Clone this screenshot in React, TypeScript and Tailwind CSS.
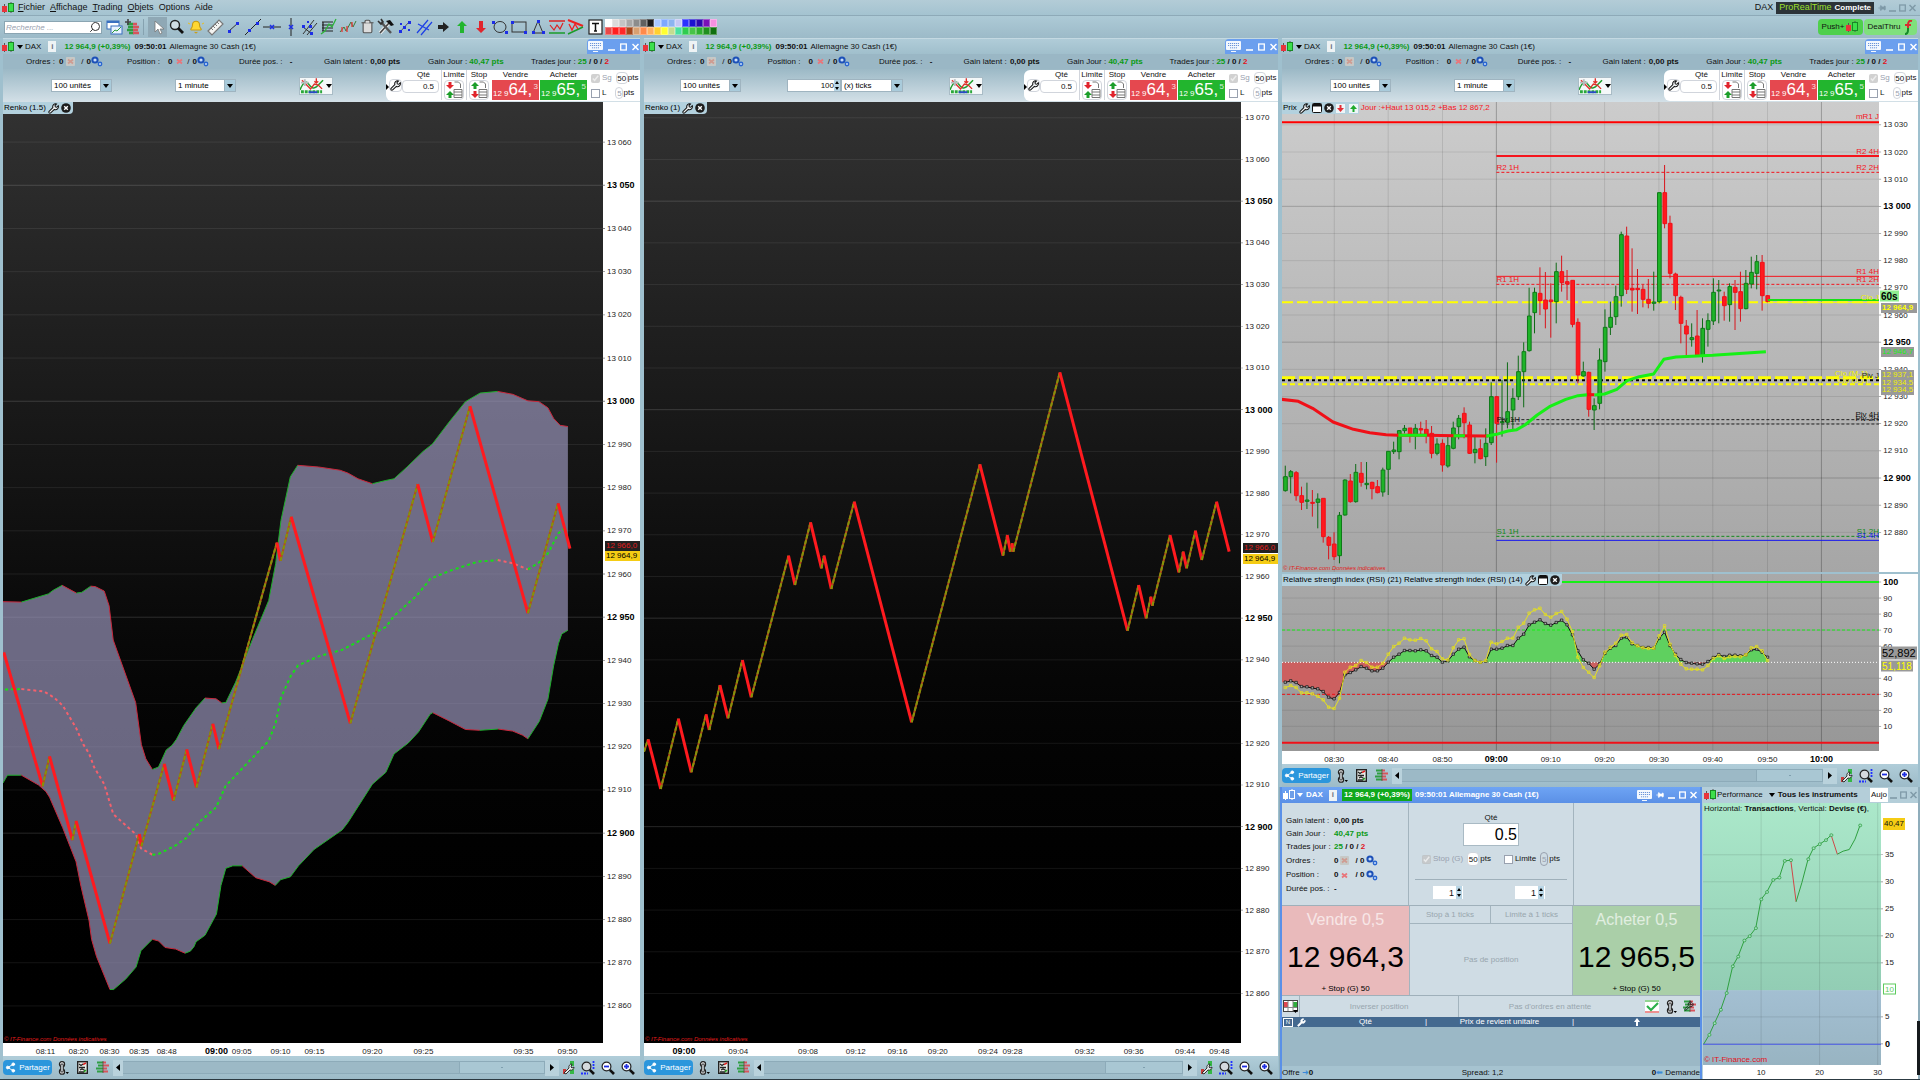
import { type ReactNode } from 'react'
import { Share2, Wrench, Trash2, Bell, Search, Pin } from 'lucide-react'

type Pt = [number, number]
type Box = { x: number; y: number; w: number; h: number }
type Label = { t: string; x: number; y: number; bold?: boolean; color?: string; anchor?: 'start' | 'middle' | 'end' }

const viewBox = (b: Box) => `${b.x} ${b.y} ${b.w} ${b.h}`
const points = (pts: Pt[]) => pts.map((p) => p.join(',')).join(' ')
const price = (n: number) => `${Math.floor(n / 1000)} ${String(n % 1000).padStart(3, '0')}`

/* ---------- chart data ---------- */

const RENKO1: Box = { x: 7, y: -681, w: 1470, h: 2305 }
const RENKO2: Box = { x: 10, y: -714, w: 1463, h: 2823 }
const PRICE: Box = { x: 5, y: 6, w: 1462, h: 1410 }
const RSI: Box = { x: 5, y: 42, w: 1462, h: 531 }
const PERF: Box = { x: 1040, y: 72, w: 432, h: 783 }

const zig1: Pt[] = [[9, 667], [104, 995], [121, 922], [177, 1127], [186, 1080], [269, 1380], [341, 1112], [346, 1142], [402, 940], [425, 1030], [457, 905], [481, 998], [521, 842], [536, 904], [678, 398], [687, 443], [713, 335], [858, 841], [1023, 255], [1060, 397], [1151, 64], [1293, 571], [1367, 302], [1396, 413]]

const upper: Pt[] = [[7, 543], [52, 544], [118, 524], [130, 515], [152, 503], [187, 522], [200, 520], [222, 505], [233, 506], [255, 517], [267, 553], [277, 637], [332, 790], [346, 893], [357, 928], [373, 954], [388, 948], [407, 906], [421, 895], [432, 880], [450, 846], [480, 803], [502, 779], [529, 781], [543, 791], [553, 790], [577, 740], [618, 636], [658, 540], [675, 450], [688, 344], [711, 237], [729, 209], [780, 213], [833, 221], [852, 228], [877, 242], [912, 254], [945, 246], [965, 242], [997, 213], [1036, 175], [1059, 157], [1100, 103], [1140, 53], [1176, 32], [1219, 28], [1256, 35], [1293, 51], [1320, 53], [1342, 68], [1356, 94], [1372, 111], [1391, 114]]

const lower: Pt[] = [[7, 987], [18, 968], [52, 968], [94, 992], [112, 1008], [121, 1022], [153, 1096], [186, 1180], [198, 1240], [218, 1325], [224, 1370], [236, 1412], [269, 1493], [278, 1493], [308, 1467], [333, 1438], [345, 1398], [373, 1370], [388, 1374], [404, 1390], [430, 1394], [453, 1404], [466, 1399], [475, 1388], [480, 1376], [502, 1360], [530, 1308], [541, 1238], [553, 1196], [570, 1190], [593, 1190], [626, 1219], [659, 1229], [674, 1238], [687, 1224], [711, 1217], [731, 1190], [769, 1150], [838, 1102], [852, 1084], [912, 990], [945, 961], [965, 916], [1000, 889], [1025, 862], [1054, 818], [1060, 815], [1100, 835], [1140, 856], [1175, 858], [1220, 855], [1256, 860], [1280, 870], [1293, 879], [1321, 836], [1342, 782], [1356, 700], [1368, 645], [1376, 622], [1391, 613]]

const middle: { color: string; pts: Pt[] }[] = [
  { color: '#16e016', pts: [[12, 758], [52, 757]] },
  { color: '#f4606c', pts: [[52, 757], [108, 763], [132, 778], [153, 797], [186, 852], [204, 893], [218, 915], [230, 948], [255, 990], [277, 1063], [333, 1113], [345, 1147], [373, 1163]] },
  { color: '#16e016', pts: [[373, 1163], [388, 1161], [430, 1140], [457, 1121], [490, 1081], [529, 1047], [552, 995], [603, 941], [658, 884], [675, 840], [688, 778], [712, 725], [730, 699], [780, 677], [838, 661], [878, 640], [945, 605], [965, 578], [1020, 529], [1054, 487], [1100, 468], [1170, 445], [1219, 441]] },
  { color: '#f4606c', pts: [[1219, 441], [1256, 449], [1293, 464]] },
  { color: '#16e016', pts: [[1293, 464], [1320, 447], [1342, 425], [1368, 375], [1385, 362]] },
]

const zig2: Pt[] = [[10, 1235], [20, 1198], [51, 1347], [94, 1136], [126, 1297], [162, 1123], [170, 1170], [196, 1035], [216, 1135], [251, 960], [273, 1072], [364, 647], [380, 735], [418, 547], [445, 685], [451, 647], [469, 747], [525, 485], [666, 1147], [833, 373], [890, 647], [900, 585], [908, 635], [912, 610], [915, 635], [1029, 97], [1195, 872], [1222, 735], [1241, 835], [1252, 770], [1256, 797], [1299, 585], [1321, 697], [1331, 635], [1340, 685], [1361, 572], [1377, 660], [1413, 485], [1444, 635]]

// high, body top, body bottom, low, 1 = up
const candles = [
  [1097, 1130, 1172, 1175, 1], [1110, 1115, 1130, 1180, 1], [1113, 1118, 1187, 1202, 0], [1160, 1187, 1207, 1230, 0], [1148, 1200, 1204, 1227, 1],
  [1170, 1207, 1210, 1250, 0], [1180, 1197, 1207, 1285, 1], [1195, 1195, 1310, 1328, 0], [1308, 1312, 1336, 1378, 0], [1297, 1332, 1370, 1380, 0],
  [1236, 1246, 1367, 1390, 1], [1138, 1140, 1245, 1247, 1], [1122, 1143, 1205, 1208, 0], [1092, 1117, 1205, 1208, 1], [1086, 1120, 1147, 1160, 0],
  [1086, 1150, 1154, 1168, 1], [1145, 1147, 1166, 1198, 0], [1140, 1160, 1178, 1180, 0], [1103, 1110, 1176, 1190, 1], [1054, 1054, 1108, 1185, 1],
  [1025, 1050, 1055, 1062, 1], [990, 992, 1055, 1078, 1], [975, 985, 992, 1000, 1], [984, 984, 1005, 1028, 0], [972, 985, 1005, 1048, 1],
  [965, 986, 990, 1005, 0], [960, 988, 1003, 1030, 0], [978, 1000, 1060, 1075, 0], [1015, 1032, 1060, 1066, 1], [1018, 1030, 1095, 1115, 0],
  [1010, 1037, 1098, 1103, 1], [965, 984, 1045, 1048, 1], [945, 955, 980, 1018, 1], [922, 940, 968, 1015, 0], [965, 975, 1060, 1062, 0],
  [1010, 1048, 1058, 1090, 1], [1018, 1046, 1076, 1078, 0], [985, 1030, 1070, 1098, 1], [847, 890, 1028, 1035, 1], [888, 890, 970, 1088, 0],
  [840, 965, 968, 1010, 1], [787, 935, 967, 985, 1], [865, 895, 930, 988, 1], [767, 815, 890, 900, 1], [727, 755, 815, 922, 1],
  [563, 648, 752, 755, 1], [563, 577, 638, 700, 1], [502, 580, 602, 645, 0], [516, 600, 627, 685, 0], [550, 600, 605, 713, 0],
  [488, 515, 605, 670, 1], [467, 515, 548, 575, 0], [510, 545, 552, 600, 0], [541, 541, 673, 682, 0], [655, 667, 825, 850, 0],
  [785, 815, 828, 830, 1], [815, 817, 928, 950, 0], [895, 917, 930, 990, 1], [745, 780, 910, 928, 1], [628, 682, 785, 815, 1],
  [605, 652, 682, 705, 1], [557, 590, 650, 675, 1], [395, 404, 587, 620, 1], [380, 408, 568, 582, 0], [445, 565, 570, 635, 0],
  [507, 565, 569, 642, 0], [555, 568, 598, 622, 0], [537, 598, 610, 625, 0], [515, 606, 610, 632, 1], [278, 278, 605, 610, 1],
  [195, 278, 371, 385, 0], [347, 370, 520, 535, 0], [518, 522, 587, 630, 0], [587, 592, 670, 730, 0], [660, 678, 702, 765, 0],
  [670, 713, 719, 740, 1], [630, 708, 765, 767, 0], [655, 685, 767, 788, 1], [640, 662, 688, 740, 1], [535, 577, 663, 675, 1],
  [540, 570, 573, 670, 1], [575, 590, 617, 662, 0], [550, 560, 614, 665, 1], [540, 562, 577, 690, 0], [515, 575, 626, 665, 0],
  [510, 550, 626, 628, 1], [470, 517, 552, 565, 1], [465, 485, 520, 568, 1], [465, 487, 587, 632, 0], [585, 587, 605, 607, 0],
]
const candleX = (i: number) => 13 + i * 13.27

const rsi21 = [367, 363, 368, 380, 381, 384, 387, 395, 412, 417, 398, 345, 338, 330, 320, 325, 333, 333, 325, 307, 292, 283, 272, 272, 273, 270, 273, 287, 292, 307, 303, 283, 268, 262, 291, 302, 307, 304, 268, 268, 265, 257, 257, 235, 223, 195, 187, 180, 191, 196, 188, 181, 195, 225, 273, 300, 310, 328, 312, 280, 265, 257, 235, 232, 252, 257, 263, 263, 265, 235, 217, 257, 283, 299, 308, 310, 312, 313, 305, 293, 284, 290, 286, 286, 288, 285, 270, 268, 277, 292]
const rsi14 = [383, 377, 383, 399, 399, 402, 409, 420, 442, 446, 415, 337, 322, 317, 302, 308, 322, 322, 310, 283, 260, 250, 235, 240, 241, 236, 243, 267, 275, 297, 300, 264, 240, 237, 284, 302, 307, 302, 247, 252, 245, 235, 235, 202, 190, 160, 150, 145, 164, 172, 161, 155, 178, 215, 292, 323, 337, 353, 318, 277, 262, 250, 226, 224, 248, 258, 264, 266, 265, 228, 198, 253, 287, 313, 327, 328, 328, 330, 317, 296, 288, 296, 291, 290, 291, 285, 264, 260, 273, 302]
const rsiPoints = (values: number[]): Pt[] => values.map((v, i) => [candleX(i), v])
const RSI_MID = 307

const perf: Pt[] = [[1042, 792], [1055, 765], [1068, 730], [1083, 690], [1097, 640], [1112, 560], [1125, 531], [1140, 483], [1153, 470], [1168, 446], [1181, 360], [1195, 338], [1210, 302], [1225, 295], [1238, 245], [1253, 243], [1266, 367], [1280, 310], [1295, 240], [1308, 207], [1323, 195], [1338, 183], [1351, 168], [1366, 225], [1380, 216], [1395, 211], [1409, 180], [1421, 139]]
const perfHidden = [0, 16, 17, 23, 24, 25, 26]

const times1: [string, number][] = [['08:11', 111], ['08:20', 192], ['08:30', 268], ['08:35', 341], ['08:48', 408], ['09:00', 530], ['09:05', 592], ['09:10', 687], ['09:15', 770], ['09:20', 912], ['09:25', 1037], ['09:35', 1282], ['09:50', 1390]]
const times2: [string, number][] = [['09:00', 108], ['09:04', 241], ['09:08', 412], ['09:12', 529], ['09:16', 631], ['09:20', 730], ['09:24', 853], ['09:28', 913], ['09:32', 1090], ['09:36', 1210], ['09:44', 1336], ['09:48', 1420]]
const times3: [string, number][] = [['08:30', 133], ['08:40', 265], ['08:50', 398], ['09:00', 530], ['09:10', 663], ['09:20', 795], ['09:30', 928], ['09:40', 1060], ['09:50', 1194], ['10:00', 1326]]

/* ---------- small icons ---------- */

function Candles({ white }: { white?: boolean }) {
  return (
    <svg width="14" height="12" viewBox="0 0 14 12" className="shrink-0">
      <path d="M3.5 2v9M10 0v11" stroke={white ? '#fff' : '#555'} />
      <rect x="1" y="4" width="5" height="6" fill={white ? '#fff' : '#e8343c'} />
      <rect x="7.5" y="1.5" width="5" height="8" fill={white ? '#6f9fe8' : '#3ce04c'} stroke={white ? '#fff' : '#188a24'} />
    </svg>
  )
}

function Caret({ className = 'text-black' }: { className?: string }) {
  return (
    <svg width="6" height="4" viewBox="0 0 6 4" className={`shrink-0 ${className}`}>
      <path d="M0 0h6L3 4z" fill="currentColor" />
    </svg>
  )
}

function Gears() {
  return (
    <svg width="12" height="11" viewBox="0 0 12 11" className="shrink-0">
      <circle cx="4" cy="4" r="2.6" fill="#c8dcf8" stroke="#1c50b8" strokeWidth="2" />
      <circle cx="9" cy="8" r="1.7" fill="#c8dcf8" stroke="#2a66d0" strokeWidth="1.4" />
    </svg>
  )
}

function CrossBox({ pink }: { pink?: boolean }) {
  return (
    <svg width="9" height="9" viewBox="0 0 9 9" className="shrink-0">
      {!pink && <rect width="9" height="9" rx="1" fill="#c6c8c6" />}
      <path d="M2 2.5l5 4M7 2.5l-5 4" stroke={pink ? '#e8767c' : '#cf9c92'} strokeWidth="1.8" />
    </svg>
  )
}

function Info() {
  return (
    <span className="flex h-[11px] w-2 items-center justify-center bg-[#eef3f5] text-[8px] font-bold leading-none text-gray-500">i</span>
  )
}

function CloseDot() {
  return (
    <svg width="10" height="10" viewBox="0 0 10 10">
      <circle cx="5" cy="5" r="4.8" fill="#1c1c1c" />
      <path d="M3.2 3.2l3.6 3.6M6.8 3.2L3.2 6.8" stroke="#fff" strokeWidth="1.4" />
    </svg>
  )
}

// Hollow spanner used on every chart header
function Spanner({ size = 11 }: { size?: number }) {
  return (
    <svg width={size} height={size} viewBox="0 0 12 12">
      <path d="M1.200 10.800a1.200 1.200 0 0 1 0-1.700L5.300 5a3.200 3.200 0 0 1 4-4L7.600 2.800l.4 1.500 1.500.4L11.200 3a3.200 3.200 0 0 1-4.200 4L2.900 10.800a1.200 1.200 0 0 1-1.700 0z" fill="#f2f5f6" stroke="#111" strokeWidth="1.100" />
    </svg>
  )
}

function MiniWindow() {
  return (
    <svg width="10" height="10" viewBox="0 0 10 10">
      <rect x=".5" y=".5" width="9" height="9" rx="1" fill="#fff" stroke="#111" />
      <path d="M1 1h8v2.5H1z" fill="#111" />
    </svg>
  )
}

function MiniArrow({ up }: { up?: boolean }) {
  return (
    <svg width="9" height="9" viewBox="0 0 9 9">
      <rect width="9" height="9" fill="#eef5f7" />
      <path d={up ? 'M4.5 1L8 5H5.5v3h-2V5H1z' : 'M4.5 8L8 4H5.5V1h-2v3H1z'} fill={up ? '#1faa2c' : '#e23038'} />
    </svg>
  )
}

function WindowKeys({ muted, pin, keyboard = true }: { muted?: boolean; pin?: boolean; keyboard?: boolean }) {
  const line = muted ? '#7f9aa8' : '#fff'
  return (
    <>
      {keyboard && (
        <button type="button" aria-label="Clavier">
          <svg width="15" height="11" viewBox="0 0 15 11">
            <rect width="15" height="9" rx="1" fill="#f3f8fe" />
            <path d="M2 2.5h11M2 4.5h11M4 6.8h7" stroke="#6a94d8" strokeDasharray="1.2 .8" />
            <path d="M5 10.5h5" stroke="#f3f8fe" />
          </svg>
        </button>
      )}
      {pin && <button type="button" aria-label="Épingler"><Pin size={8} className="rotate-90" color={line} fill={line} /></button>}
      <button type="button" aria-label="Réduire">
        <svg width="7" height="8" viewBox="0 0 7 8"><path d="M0 7h7" stroke={line} strokeWidth="1.6" /></svg>
      </button>
      <button type="button" aria-label="Agrandir">
        <svg width="7" height="8" viewBox="0 0 7 8"><rect x=".7" y="1" width="5.6" height="6" fill="none" stroke={line} strokeWidth="1.3" /></svg>
      </button>
      <button type="button" aria-label="Fermer">
        <svg width="7" height="8" viewBox="0 0 7 8"><path d="M.5 1l6 6M6.5 1l-6 6" stroke={line} strokeWidth="1.5" /></svg>
      </button>
    </>
  )
}

function LinkIcon() {
  return (
    <svg width="12" height="14" viewBox="0 0 12 14">
      <rect x="2.500" y=".7" width="5" height="5" rx="2.200" fill="#f4f6f7" stroke="#222" strokeWidth="1.300" />
      <rect x="2.500" y="8.200" width="5" height="5" rx="2.200" fill="#f4f6f7" stroke="#222" strokeWidth="1.300" />
      <rect x="3.700" y="3" width="2.600" height="8" rx="1" fill="#cfd6da" stroke="#222" />
      <path d="M8.5 11h3.5l-1.7 2z" fill="#000" />
    </svg>
  )
}

function NotesIcon() {
  return (
    <svg width="11" height="13" viewBox="0 0 11 13">
      <rect x=".7" y=".7" width="9.6" height="11.600" fill="#e9ece8" stroke="#222" strokeWidth="1.400" />
      <path d="M2 3l2 1.5L6 3M2 6.5h6M3 9l2-1 3 1.5M2 11h5" stroke="#222" fill="none" strokeWidth="1.300" />
      <path d="M6 3.500l3-1.500" stroke="#d22" strokeWidth="1.400" />
      <path d="M7 11l2-2" stroke="#2a2" strokeWidth="1.400" />
    </svg>
  )
}

function BookIcon() {
  return (
    <svg width="13" height="13" viewBox="0 0 13 13">
      <path d="M1 1.5h6M2 4.5h5M0 7.5h7M1 10.5h6" stroke="#2f9e43" strokeWidth="2.2" />
      <path d="M7 1.5h3M7 4.5h6M7 7.5h4M7 10.5h5" stroke="#d8545c" strokeWidth="2.2" />
      <path d="M7 0v12" stroke="#5a4a40" strokeWidth=".8" />
    </svg>
  )
}

function ZoomIcon({ sign }: { sign?: 'plus' | 'minus' }) {
  return (
    <svg width="14" height="14" viewBox="0 0 14 14">
      <circle cx="5.5" cy="5.5" r="4.4" fill={sign ? '#fff' : '#d4dade'} stroke="#222" strokeWidth="1.2" />
      <path d="M8.8 8.8L13 13" stroke="#111" strokeWidth="2.6" />
      {sign && <path d={sign === 'plus' ? 'M3 5.5h5M5.5 3v5' : 'M3 5.5h5'} stroke="#2030e0" strokeWidth="1.8" />}
      {!sign && <path d="M12.5 0v8M0 12.5h7" stroke="#2030ff" strokeWidth="1.8" strokeDasharray="2 1" />}
    </svg>
  )
}

function WrenchColor() {
  return (
    <svg width="13" height="14" viewBox="0 0 13 14">
      <path d="M8 0h4v5H8z" fill="#35b845" />
      <path d="M8 8h4v5H8z" fill="#35b845" />
      <path d="M1 8h3v5H1z" fill="#c83a3a" />
      <path d="M2 12l5-5a3 3 0 0 1 3-4l-1 3 1 1 2-1a3 3 0 0 1-4 3l-4 4z" fill="#e4e8e8" stroke="#222" strokeWidth=".9" />
    </svg>
  )
}

const toolIcons: { name: string; icon: ReactNode }[] = [
  { name: 'Curseur', icon: <path d="M6 3v11l3-3 2 5 2-1-2-4h4z" fill="#fff" stroke="#777" strokeWidth=".8" /> },
  { name: 'Loupe', icon: <><circle cx="7" cy="7" r="4.5" fill="#cfdde3" stroke="#222" strokeWidth="1.4" /><path d="M10 10l5 5" stroke="#111" strokeWidth="2.8" /></> },
  { name: 'Alerte', icon: <><Bell size={14} x={2} y={2} color="#c79a10" fill="#ffd733" strokeWidth={1.8} /><path d="M1 5l2 1M17 5l-2 1" stroke="#e8c020" /></> },
  { name: 'Règle', icon: <><path d="M2 13L13 2l4 4L6 17z" fill="#f4f4f2" stroke="#777" strokeWidth="1.200" /><path d="M5 10l2 2M7 8l2 2M9 6l2 2M11 4l2 2" stroke="#777" /></> },
  { name: 'Segment', icon: <><path d="M4 13l9-8" stroke="#333" /><path d="M3 12h3v3H3zM11 4h3v3h-3z" fill="#1d2ee6" /></> },
  { name: 'Droite', icon: <><path d="M1 17L17 1" stroke="#222" /><path d="M4 11h3v3H4zM12 4h3v3h-3z" fill="#1d2ee6" /></> },
  { name: 'Horizontale', icon: <><path d="M0 9h18" stroke="#222" /><path d="M7 7l4 4M11 7l-4 4" stroke="#1d2ee6" strokeWidth="1.5" /></> },
  { name: 'Verticale', icon: <><path d="M9 0v18" stroke="#222" /><path d="M7 7l4 4M11 7l-4 4" stroke="#1d2ee6" strokeWidth="1.5" /></> },
  { name: 'Fourche', icon: <><path d="M2 16L13 2M6 17L16 5M2 9l9 7" stroke="#333" fill="none" /><path d="M1 7h3v3H1zM8 7h3v3H8zM9 14h3v3H9zM6 3h2v2H6z" fill="#1d2ee6" /></> },
  { name: 'Fibonacci', icon: <><path d="M2 4h11M2 7h11M2 10h11M2 13h11M3 4v9" stroke="#222" fill="none" strokeWidth="1.200" /><path d="M1 16l4-3 4-7 3 3 4-8" stroke="#2db43a" strokeWidth="1.3" fill="none" /></> },
  { name: 'Motif', icon: <><path d="M1 14l4-5 2 4 5-9 2 5 3-6" stroke="#3a7a3a" fill="none" /><path d="M3 9v5M8 8v6M13 4v5" stroke="#e04040" strokeWidth="1.4" /></> },
  { name: 'Supprimer', icon: <Trash2 size={15} x={2} y={1} color="#555" fill="#dcdcdc" strokeWidth={1.8} /> },
  { name: 'Outils', icon: <><path d="M3 15l9-10" stroke="#eee" strokeWidth="3.4" /><path d="M3 15l9-10" stroke="#444" strokeWidth="1.6" /><path d="M4 4l10 11" stroke="#555" strokeWidth="2.4" /><path d="M9 3l4-1 4 5-3 1z" fill="#111" /><path d="M1 3l3 3 2-2-2-3" stroke="#333" strokeWidth="1.6" fill="none" /></> },
  { name: 'Points', icon: <><path d="M4 14l9-10" stroke="#555" /><path d="M3 12h3v3H3zM7 8h3v3H7zM12 3h3v3h-3zM4 5h2v2H4zM12 11h2v2h-2z" fill="#1d2ee6" /></> },
  { name: 'Canal', icon: <><path d="M2 15L13 2M6 17L17 4M3 6l11 6" stroke="#1d3fe6" fill="none" strokeWidth="1.2" /></> },
  { name: 'Flèche droite', icon: <path d="M4 7h5V4l6 5-6 5v-3H4z" fill="#222" /> },
  { name: 'Flèche haut', icon: <path d="M9 3l5 5h-3v7H7V8H4z" fill="#22b52e" /> },
  { name: 'Flèche bas', icon: <path d="M9 15l5-5h-3V3H7v7H4z" fill="#e0262e" /> },
  { name: 'Ellipse', icon: <><ellipse cx="9" cy="9" rx="6" ry="5.5" fill="none" stroke="#333" /><path d="M1 3h3v3H1zM14 13h3v3h-3z" fill="#1d2ee6" /></> },
  { name: 'Rectangle', icon: <><rect x="2" y="4" width="14" height="10" fill="none" stroke="#333" /><path d="M1 3h3v3H1zM14 13h3v3h-3z" fill="#1d2ee6" /></> },
  { name: 'Triangle', icon: <><path d="M9 3l5 12H4z" fill="none" stroke="#333" /><path d="M8 2h3v3H8zM3 13h3v3H3zM13 13h3v3h-3z" fill="#1d2ee6" /></> },
  { name: 'Range', icon: <><path d="M1 3h16" stroke="#d22" strokeWidth="1.5" /><path d="M1 15h16" stroke="#1a9c2a" strokeWidth="1.5" /><path d="M2 7l4 5 3-5 3 4 3-6" stroke="#d22" fill="none" strokeWidth="1.2" /></> },
  { name: 'Biseau', icon: <><path d="M1 2l15 6" stroke="#e22" strokeWidth="2" /><path d="M1 16L16 9" stroke="#1a9c2a" strokeWidth="1.5" /><path d="M2 6l3 6 3-6 3 5" stroke="#e22" fill="none" strokeWidth="1.3" /></> },
  { name: 'Texte', icon: <><rect x="3" y="2" width="13" height="14" fill="#fff" stroke="#222" strokeWidth="1.2" /><path d="M6 5.5h7M9.5 5.5V13M8 13h3" stroke="#111" strokeWidth="1.5" /></> },
]

const palette = [
  ['#ffffff', '#dcdcdc', '#c4c4c4', '#a8a8a8', '#8c8c8c', '#606060', '#1c1c1c', '#a9c8ff', '#7ea8ff', '#8cb4f0', '#c4c8f4', '#2c30ff', '#1c10d0', '#2c08b0', '#7a10b8', '#f590e0'],
  ['#e84848', '#ff2020', '#ff2828', '#a4481c', '#d8a070', '#ff8a4a', '#ffb060', '#ffd030', '#ffff30', '#c4dc90', '#4ce0a0', '#30cc50', '#48c448', '#30b030', '#209020', '#107010'],
]

/* ---------- shared parts ---------- */

function Select({ label, value, className }: { label: string; value: string; className: string }) {
  return (
    <span className={`relative block h-[13px] ${className}`}>
      <select aria-label={label} className="block h-[13px] w-full appearance-none border border-[#9fb4c0] bg-white pl-[2px] text-[8px] leading-none text-black">
        <option>{value}</option>
      </select>
      <span className="pointer-events-none absolute inset-y-0 right-0 flex w-3 items-center justify-center border border-[#9fb4c0] bg-[#a9cbdb]">
        <Caret />
      </span>
    </span>
  )
}

function TopBar() {
  return (
    <header className="shrink-0 bg-[#a5c3d0]">
      <div className="flex h-4 items-center border-b border-[#8eaab8] bg-linear-to-b from-[#b3ccd7] to-[#a4c3d0] pl-px pr-1 text-[9px]">
        <Candles />
        <nav className="ml-[3px] flex gap-[5px]">
          {['Fichier', 'Affichage', 'Trading', 'Objets', 'Options', 'Aide'].map((m) => (
            <button type="button" key={m}>
              <span className={m === 'Options' || m === 'Aide' ? '' : 'underline'}>{m[0]}</span>{m.slice(1)}
            </button>
          ))}
        </nav>
        <span className="ml-auto text-[9px]">DAX</span>
        <span className="ml-[3px] flex h-3 items-center bg-[#2c3338] px-[3px] text-[8px] font-bold text-white">
          <span className="mr-[3px] text-[9px] font-normal text-[#9be02c]">ProRealTime</span>Complete
        </span>
        <span className="ml-1 flex gap-[3px]"><WindowKeys muted pin keyboard={false} /></span>
      </div>
      <div className="flex h-[22px] items-center bg-linear-to-b from-[#adcad6] to-[#9cbac8] pl-1 pr-[3px]">
        <label className="flex h-[13px] w-[98px] items-center border border-[#8ba5b2] bg-white">
          <input aria-label="Recherche" placeholder="Recherche ..." className="w-full min-w-0 bg-transparent pl-px text-[8px] italic outline-none placeholder:text-gray-400" />
          <Search size={12} className="shrink-0 -scale-x-100" color="#333" />
        </label>
        <button type="button" aria-label="Nouveau graphique" className="ml-1">
          <svg width="17" height="17" viewBox="0 0 17 17">
            <rect x="1" y="2" width="12" height="8" fill="#fff" stroke="#3a70c0" /><path d="M1 3h12" stroke="#3a70c0" strokeWidth="2" />
            <rect x="5" y="7" width="11" height="8" fill="#e8f2ff" stroke="#3a70c0" /><path d="M6 14l3-3 2 1 4-4" stroke="#2a9a3a" fill="none" />
          </svg>
        </button>
        <button type="button" aria-label="Listes" className="ml-px">
          <svg width="16" height="16" viewBox="0 0 16 16">
            <path d="M3 5h6M4 8h5M3 11h6M5 14h5" stroke="#2f9e43" strokeWidth="2.4" />
            <path d="M9 5h4M9 8h6M9 11h5M9 14h6" stroke="#d8545c" strokeWidth="2.4" />
            <path d="M4 0v6M1 3h6" stroke="#444" strokeWidth="1.6" />
          </svg>
        </button>
        <span className="ml-[3px] h-4 w-px bg-[#86a2b0]" />
        <div className="ml-1 flex">
          {toolIcons.map((t, i) => (
            <button type="button" key={t.name} aria-label={t.name} className={`flex h-5 w-[19px] items-center justify-center ${i === 0 ? 'bg-[#8fa8b5]' : ''}`}>
              <svg width="18" height="18" viewBox="0 0 18 18">{t.icon}</svg>
            </button>
          ))}
        </div>
        <div className="ml-px grid grid-cols-16">
          {palette.flat().map((c, i) => (
            <button type="button" key={i} aria-label={`Couleur ${c}`} className="h-2 w-[7px] border border-white/30" style={{ backgroundColor: c }} />
          ))}
        </div>
        <button type="button" className="ml-auto flex h-4 w-[45px] items-center justify-center gap-px rounded-sm bg-[#4fd04c] text-[8px]">Push+<Candles /></button>
        <button type="button" className="ml-px flex h-4 w-[53px] items-center justify-center gap-1 rounded-sm bg-[#7fe07c] text-[8px]">
          DealThru
          <svg width="9" height="15" viewBox="0 0 9 15">
            <path d="M8 1Q4 0 4 5v3M1 5h6" stroke="#d82a30" strokeWidth="2" fill="none" /><path d="M1 14q3 0 3-4V8" stroke="#158a28" strokeWidth="2" fill="none" />
          </svg>
        </button>
      </div>
    </header>
  )
}

function TitleBar() {
  return (
    <div className="flex h-4 shrink-0 items-center border-t border-[#c4d9e2] bg-linear-to-b from-[#b0ccd8] to-[#a0bfcc] text-[8px]">
      <span className="-ml-[2px] flex"><Candles /></span>
      <Caret className="ml-[2px] text-black" />
      <span className="ml-[2px] text-[8px]">DAX</span>
      <span className="ml-[7px]"><Info /></span>
      <b className="ml-2 text-[#0a9a14]">12 964,9 (+0,39%)</b>
      <b className="ml-1">09:50:01</b>
      <span className="ml-[3px]">Allemagne 30 Cash (1€)</span>
      <span className="ml-auto flex h-4 w-[53px] items-center justify-end gap-[5px] rounded-tl-sm bg-[#6b9fee] pr-px"><WindowKeys /></span>
    </div>
  )
}

function StatsRow() {
  return (
    <div className="grid h-[15px] shrink-0 grid-cols-[101fr_112fr_85fr_104fr_103fr_109fr] items-center whitespace-nowrap bg-[#9ab7c5] pl-[23px] text-[8px]">
      <span className="flex items-center">Ordres :<b className="ml-1 mr-[3px]">0</b><CrossBox /><span className="ml-[6px]">/</span><b className="ml-[3px]">0</b><Gears /></span>
      <span className="flex items-center">Position :<b className="ml-2 mr-[3px]">0</b><CrossBox pink /><span className="ml-[3px]">/</span><b className="ml-[3px]">0</b><Gears /></span>
      <span>Durée pos. : <b className="ml-[5px]">-</b></span>
      <span>Gain latent : <b className="ml-px">0,00 pts</b></span>
      <span>Gain Jour : <b className="text-[#0a9a14]">40,47 pts</b></span>
      <span>Trades jour : <b><span className="text-[#0a9a14]">25</span> / 0 / <span className="text-[#e0121c]">2</span></b></span>
    </div>
  )
}

function OrderArrows({ label }: { label: string }) {
  const stop = label === 'Stop'
  return (
    <div className="flex w-[25px] flex-col items-center border-l border-gray-300">
      <span className="h-[10px] leading-[10px]">{label}</span>
      <button type="button" aria-label={label} className="flex h-5 w-[20px] items-center justify-center rounded-sm border border-gray-300 bg-white">
        <svg width="17" height="18" viewBox="0 0 17 18">
          <path d={stop ? 'M4 1l4 4H5.5v3h-3V5H0z' : 'M4 8l4-4H5.5V1h-3v3H0z'} fill={stop ? '#1c9e2a' : '#e0242c'} />
          <path d={stop ? 'M4 17l4-4H5.5v-3h-3v3H0z' : 'M4 10l4 4H5.5v3h-3v-3H0z'} fill={stop ? '#e0242c' : '#1c9e2a'} />
          <path d="M8.500 1h4l2 2v4M8 8.500h8v8H8zM8 11h8M8 14h8" fill="none" stroke="#777" />
        </svg>
      </button>
    </div>
  )
}

function PriceButton({ label, big, small, color }: { label: string; big: string; small: string; color: string }) {
  return (
    <div className="ml-px flex flex-col items-center">
      <span className="h-[10px] leading-[10px]">{label}</span>
      <button type="button" className={`relative flex h-5 w-[47px] items-end justify-start pl-px text-white ${color}`}>
        <span className="whitespace-nowrap pb-[2px] text-[8px] leading-none">12 9</span>
        <span className="text-[17px] leading-[20px]">{big},</span>
        <span className="absolute right-px top-[3px] text-[8px] leading-none opacity-80">{small}</span>
      </button>
    </div>
  )
}

function OrderBox() {
  return (
    <div className="flex h-[31px] w-[254px] shrink-0 items-start rounded-l-md bg-white text-[8px]">
      <span className="mt-[14px] h-0 w-0 border-y-[3px] border-l-[3px] border-y-transparent border-l-black" />
      <button type="button" aria-label="Réglages" className="mt-[9px] flex h-[13px] w-[13px] items-center justify-center rounded-sm border border-gray-300"><Spanner /></button>
      <label className="flex flex-col items-end">
        <span className="h-[10px] pr-[9px] leading-[10px]">Qté</span>
        <input defaultValue="0.5" className="h-[13px] w-[37px] rounded-sm border border-gray-300 pr-1 text-right text-[8px] outline-none" />
      </label>
      <span className="w-[2px]" />
      <OrderArrows label="Limite" />
      <OrderArrows label="Stop" />
      <PriceButton label="Vendre" big="64" small="3" color="bg-[#e5484f]" />
      <PriceButton label="Acheter" big="65" small="5" color="bg-[#22b52e]" />
      <div className="ml-1 mt-[2px] flex flex-1 flex-col gap-[3px]">
        <div className="flex items-center">
          <label className="flex items-center gap-[2px] text-gray-400"><input type="checkbox" defaultChecked disabled className="m-0 h-[9px] w-[9px]" />Sg</label>
          <input aria-label="Stop pts" defaultValue="50" className="ml-1 h-3 w-3 rounded-sm border border-gray-300 text-center text-[8px] outline-none" /><span>pts</span>
        </div>
        <div className="flex items-center">
          <label className="flex items-center gap-[2px]"><input type="checkbox" className="m-0 h-[9px] w-[9px] appearance-none border border-gray-400" />L</label>
          <input aria-label="Limite pts" defaultValue="5" className="ml-[9px] h-3 w-2 rounded-sm border border-gray-300 text-center text-[8px] text-gray-400 outline-none" /><span>pts</span>
        </div>
      </div>
    </div>
  )
}

function SpinArrows() {
  return (
    <span className="flex h-full w-[6px] flex-col justify-around bg-[#b9d6e6] px-px">
      <svg width="4" height="3" viewBox="0 0 4 3"><path d="M0 3h4L2 0z" /></svg>
      <svg width="4" height="3" viewBox="0 0 4 3"><path d="M0 0h4L2 3z" /></svg>
    </span>
  )
}

function ChartToolbar({ ticks }: { ticks?: boolean }) {
  return (
    <div className="flex h-[33px] shrink-0 items-start bg-linear-to-b from-[#9cb9c6] to-[#d3e0e7] pt-px">
      <div className={`flex h-[31px] flex-1 items-center ${ticks ? 'gap-[46px] pl-9' : 'gap-[63px] pl-12'}`}>
        <Select label="Unités" value="100 unités" className="w-[61px]" />
        {ticks ? (
          <div className="flex">
            <span className="flex h-[13px] items-center border border-[#9fb4c0] bg-white">
              <input aria-label="Ticks" defaultValue="100" className="w-[46px] text-right text-[8px] outline-none" />
              <SpinArrows />
            </span>
            <Select label="Type" value="(x) ticks" className="w-[62px]" />
          </div>
        ) : (
          <Select label="Période" value="1 minute" className="w-[61px]" />
        )}
        <button type="button" aria-label="Indicateurs" className="flex h-[18px] w-[34px] items-center gap-[2px] border border-[#a9bcc6] bg-[#f4f8f9]">
          <svg width="25" height="16" viewBox="0 0 25 16">
            <path d="M0 12q5-12 9-6t8 3l7-7" stroke="#1f9e2e" strokeWidth="1.6" fill="none" />
            <path d="M2 2l5 5 4 4 4-5 4 1 4 4" stroke="#e0302c" strokeWidth="1.4" fill="none" />
            <path d="M1 14h22" stroke="#2aa83a" strokeWidth="3" strokeDasharray="3 1" /><path d="M9 14.500h9" stroke="#2a48c8" strokeWidth="2" />
            <path d="M5 1v7M1 4.500h8" stroke="#b8bcc0" strokeWidth="2" /><path d="M17 0v4M15 3l2 2 2-2" stroke="#e0302c" strokeWidth="1.4" fill="none" />
          </svg>
          <Caret />
        </button>
      </div>
      <OrderBox />
    </div>
  )
}

// Text placed in chart units, never scaled with the plot
function Labels({ box, items }: { box: Box; items: Label[] }) {
  return (
    <svg className="absolute inset-0 h-full w-full overflow-visible">
      {items.map((l, i) => (
        <text
          key={i}
          x={`${((l.x - box.x) / box.w) * 100}%`}
          y={`${((l.y - box.y) / box.h) * 100}%`}
          dominantBaseline="central"
          textAnchor={l.anchor ?? 'start'}
          className={l.bold ? 'text-[9px] font-bold' : 'text-[8px]'}
          fill={l.color ?? (l.bold ? '#000' : '#222')}
        >
          {l.t}
        </text>
      ))}
    </svg>
  )
}

function Plot({ box, className, overlay, children }: { box: Box; className: string; overlay?: ReactNode; children: ReactNode }) {
  return (
    <div className={`relative min-h-0 min-w-0 flex-1 overflow-hidden ${className}`}>
      <svg viewBox={viewBox(box)} preserveAspectRatio="none" className="absolute inset-0 h-full w-full [&_*]:[vector-effect:non-scaling-stroke]">
        {children}
      </svg>
      {overlay}
    </div>
  )
}

function Tag({ box, y, className, children }: { box: Box; y: number; className: string; children: ReactNode }) {
  return (
    <span className={`absolute -translate-y-1/2 overflow-hidden whitespace-nowrap ${className}`} style={{ top: `${((y - box.y) / box.h) * 100}%` }}>
      {children}
    </span>
  )
}

function YAxis({ box, items, width, children }: { box: Box; items: Label[]; width: string; children?: ReactNode }) {
  return (
    <div className={`relative shrink-0 bg-white ${width}`}>
      <Labels box={{ ...box, x: 0, w: 37 }} items={items.map((l) => ({ ...l, x: 4 }))} />
      <svg viewBox={`0 ${box.y} 37 ${box.h}`} preserveAspectRatio="none" className="absolute inset-0 h-full w-full">
        {items.map((l) => <path key={l.y} d={`M0 ${l.y}h2`} stroke="#888" strokeWidth="2" />)}
      </svg>
      {children}
    </div>
  )
}

function XAxis({ box, times, width }: { box: Box; times: [string, number][]; width: string }) {
  return (
    <div className="flex h-[13px] shrink-0 bg-white">
      <div className="relative flex-1">
        <Labels box={{ ...box, y: 0, h: 13 }} items={times.map(([t, x]) => ({ t, x, y: 8, bold: t === '09:00' || t === '10:00', anchor: 'middle' }))} />
      </div>
      <div className={width} />
    </div>
  )
}

function Tab({ title, children }: { title: string; children?: ReactNode }) {
  return (
    <div className="absolute left-0 top-0 flex h-3 items-center gap-[2px] rounded-br-sm bg-[#b3d1de] pl-px pr-[2px] text-[8px] leading-none text-black">
      {title}
      <button type="button" aria-label="Configurer"><Spanner /></button>
      {children}
      <button type="button" aria-label="Fermer"><CloseDot /></button>
    </div>
  )
}

function Copyright() {
  return <span className="absolute bottom-px left-px text-[6px] italic leading-none text-[#e01c1c]">© IT-Finance.com Données indicatives</span>
}

function BottomBar({ thumb }: { thumb: string }) {
  return (
    <div className="flex h-[23px] shrink-0 items-center bg-linear-to-b from-[#b0cdd9] to-[#9dbbc8]">
      <button type="button" className="flex h-[15px] w-[49px] items-center justify-center gap-[3px] rounded-sm bg-[#2b96dc] text-[8px] text-white">
        <Share2 size={11} fill="#fff" />Partager
      </button>
      <div className="ml-[5px] flex items-center gap-2"><LinkIcon /><NotesIcon /><BookIcon /></div>
      <button type="button" aria-label="Reculer" className="ml-1 flex h-4 w-[10px] items-center justify-center bg-[#b9d2dc]">
        <svg width="4" height="7" viewBox="0 0 4 7"><path d="M4 0v7L0 3.500z" /></svg>
      </button>
      <div className="flex h-[13px] flex-1 justify-end border-y border-[#8dabb9] bg-[#9cb9c6]">
        <span className={`flex items-center justify-center border-x border-[#8dabb9] bg-[#a9c7d3] ${thumb}`}><i className="h-px w-[2px] bg-[#7f9fae]" /></span>
      </div>
      <button type="button" aria-label="Avancer" className="flex h-4 w-[14px] items-center justify-center bg-[#b9d2dc]">
        <svg width="4" height="7" viewBox="0 0 4 7"><path d="M0 0v7l4-3.500z" /></svg>
      </button>
      <div className="ml-[3px] flex items-center gap-[6px] pr-[5px]"><WrenchColor /><ZoomIcon /><ZoomIcon sign="minus" /><ZoomIcon sign="plus" /></div>
    </div>
  )
}

function Renko({ pts }: { pts: Pt[] }) {
  return (
    <>
      {pts.slice(1).map((p, i) => {
        const seg = points([pts[i], p])
        return p[1] < pts[i][1] ? (
          <g key={i} fill="none">
            <polyline points={seg} stroke="#b0501c" strokeWidth="2" />
            <polyline points={seg} stroke="#849408" strokeWidth="2" strokeDasharray="4 2" />
          </g>
        ) : (
          <polyline key={i} points={seg} fill="none" stroke="#ff1a1f" strokeWidth="3" />
        )
      })}
    </>
  )
}

function Band({ pts }: { pts: Pt[] }) {
  return (
    <>
      {pts.slice(1).map((p, i) => (
        <polyline key={i} points={points([pts[i], p])} fill="none" stroke={p[1] <= pts[i][1] ? '#1fae2c' : '#c8283c'} />
      ))}
    </>
  )
}

const scale = (top: number, bottom: number, zero: number, step: number): Label[] => {
  const out: Label[] = []
  for (let p = top; p >= bottom; p -= 10) out.push({ t: price(p), x: 0, y: zero + ((13000 - p) / 10) * step, bold: p % 50 === 0 })
  return out
}
const scale1 = scale(13060, 12860, 52, 105.8)
const scale2 = scale(13070, 12860, 209, 125.1)
const scale3 = scale(13030, 12880, 319, 81.5)

/* ---------- panels ---------- */

function RenkoPanel({ title, box, labels, times, pts, tagY, ticks, thumb, children }: {
  title: string; box: Box; labels: Label[]; times: [string, number][]; pts: Pt[]; tagY: [number, number]; ticks?: boolean; thumb: string; children?: ReactNode
}) {
  return (
    <section className="flex min-h-0 min-w-0 flex-col bg-[#9fc0ce] pl-[3px] pr-px">
      <TitleBar />
      <StatsRow />
      <ChartToolbar ticks={ticks} />
      <div className="flex min-h-0 flex-1">
        <Plot box={box} className="bg-linear-to-b from-[#323232] to-black" overlay={<><Tab title={title} /><Copyright /></>}>
          {labels.map((l) => (
            <path key={l.y} d={`M${box.x} ${l.y}h${box.w}`} stroke="#fff" strokeOpacity={l.bold ? 0.15 : 0.08} />
          ))}
          {children}
          <Renko pts={pts} />
        </Plot>
        <YAxis box={box} items={labels} width="w-[37px]">
          <Tag box={box} y={tagY[0]} className="left-[2px] right-0 h-[10px] bg-[#222] pl-px text-[8px] leading-[10px] text-[#e01c1c]">12 966,0</Tag>
          <Tag box={box} y={tagY[1]} className="left-[2px] right-0 h-[10px] bg-[#f5cc14] pl-px text-[8px] leading-[10px] text-black">12 964,9</Tag>
        </YAxis>
      </div>
      <XAxis box={box} times={times} width="w-[37px]" />
      <BottomBar thumb={thumb} />
    </section>
  )
}

const levels: { y: number; from: number; color: string; w: number; dash?: string }[] = [
  { y: 67, from: 5, color: '#f00', w: 2 },
  { y: 168, from: 530, color: '#f5141c', w: 2 },
  { y: 217, from: 530, color: '#f5141c', w: 1, dash: '3 2' },
  { y: 529, from: 530, color: '#f5141c', w: 1 },
  { y: 553, from: 530, color: '#f5141c', w: 1, dash: '3 2' },
  { y: 607, from: 5, color: '#ff0', w: 2, dash: '11 4' },
  { y: 833, from: 5, color: '#ff0', w: 3, dash: '13 4' },
  { y: 841, from: 5, color: '#000', w: 2, dash: '3 3' },
  { y: 853, from: 5, color: '#ff0', w: 2, dash: '5 3' },
  { y: 959, from: 530, color: '#222', w: 1, dash: '3 2' },
  { y: 972, from: 530, color: '#222', w: 1, dash: '3 2' },
  { y: 1309, from: 530, color: '#128a1c', w: 1, dash: '3 2' },
  { y: 1321, from: 530, color: '#1414f0', w: 1 },
]

const levelLabels: Label[] = [
  { t: 'mR1 J', x: 1467, y: 50, color: '#f5141c', anchor: 'end' },
  { t: 'R2 4H', x: 1467, y: 153, color: '#f5141c', anchor: 'end' },
  { t: 'R2 1H', x: 530, y: 203, color: '#f5141c' },
  { t: 'R2 2H', x: 1467, y: 203, color: '#f5141c', anchor: 'end' },
  { t: 'R1 4H', x: 1467, y: 514, color: '#f5141c', anchor: 'end' },
  { t: 'R1 1H', x: 530, y: 539, color: '#f5141c' },
  { t: 'R1 2H', x: 1467, y: 539, color: '#f5141c', anchor: 'end' },
  { t: 'Clo J', x: 1467, y: 591, color: '#f0f000', anchor: 'end' },
  { t: 'Clo (M-1)', x: 1440, y: 819, color: '#f0f000', anchor: 'end' },
  { t: 'Piv J', x: 1467, y: 826, color: '#222', anchor: 'end' },
  { t: 'Clo (J-1)', x: 1440, y: 840, color: '#f0f000', anchor: 'end' },
  { t: 'Piv 1H', x: 530, y: 957, color: '#111' },
  { t: 'Piv 4H', x: 1467, y: 945, color: '#111', anchor: 'end' },
  { t: 'Piv 2H', x: 1467, y: 955, color: '#111', anchor: 'end' },
  { t: 'S1 1H', x: 530, y: 1295, color: '#128a1c' },
  { t: 'S1 2H', x: 1467, y: 1295, color: '#128a1c', anchor: 'end' },
  { t: 'S1 4H', x: 1467, y: 1307, color: '#1414f0', anchor: 'end' },
]

function PricePlot() {
  return (
    <div className="flex min-h-0 flex-[470]">
      <Plot
        box={PRICE}
        className="bg-linear-to-b from-[#cccccc] to-[#a6a6a6]"
        overlay={
          <>
            <Labels box={PRICE} items={levelLabels} />
            <div className="absolute left-0 top-0 flex h-3 items-center gap-[2px] whitespace-nowrap text-[8px] leading-none text-black">
              <span className="flex h-3 items-center gap-[2px] bg-[#b3d1de] px-px">
                Prix
                <button type="button" aria-label="Configurer"><Spanner /></button>
                <MiniWindow />
                <button type="button" aria-label="Fermer"><CloseDot /></button>
                <MiniArrow />
                <span className="ml-[2px]"><MiniArrow up /></span>
              </span>
              <span className="text-[#f5141c]">Jour :+Haut 13 015,2 +Bas 12 867,2</span>
            </div>
            <Copyright />
          </>
        }
      >
        {scale3.map((l) => <path key={l.y} d={`M5 ${l.y}h1462`} stroke="#000" strokeOpacity={l.bold ? 0.2 : 0.09} />)}
        {times3.map(([t, x]) => <path key={t} d={`M${x} 6v1410`} stroke="#000" strokeOpacity={t.endsWith(':00') ? 0.25 : 0.1} />)}
        {levels.map((l) => <path key={l.y} d={`M${l.from} ${l.y}H1467`} stroke={l.color} strokeWidth={l.w} strokeDasharray={l.dash} />)}
        {candles.map(([hi, top, bottom, lo, up], i) => (
          <g key={i}>
            <path d={`M${candleX(i)} ${hi}V${lo}`} stroke={up ? '#0e6a16' : '#d8141c'} />
            <rect x={candleX(i) - 4} y={top} width="9" height={Math.max(bottom - top, 3)} fill={up ? '#1eb428' : '#ff1a1f'} stroke={up ? '#0e7a18' : '#f01018'} />
          </g>
        ))}
        <g fill="none" strokeWidth="3" strokeLinejoin="round">
          <polyline points="4,898 45,904 80,925 130,966 180,988 220,998 260,1004 290,1006 360,1006 430,1007 510,1008" stroke="#f01018" />
          <path d="M290 1006h70M425 1007h28" stroke="#16f016" />
          <polyline points="505,1009 530,1003 558,993 580,989 600,975 630,945 660,920 700,898 730,887 752,884" stroke="#16f016" />
          <path d="M752 884h18" stroke="#f01018" />
          <polyline points="770,885 795,882 825,868 850,842 880,830 915,822 940,778 970,771 1060,766 1190,755" stroke="#16f016" />
        </g>
        <path d="M1195 600H1467" stroke="#16e016" strokeWidth="2" />
        <path d="M1195 607H1467" stroke="#ff0" />
      </Plot>
      <YAxis box={PRICE} items={scale3} width="w-[39px]">
        <Tag box={PRICE} y={625} className="left-[2px] right-px h-[10px] bg-[#999] pl-px text-[8px] font-bold leading-[10px] text-[#ff0]">12 964,9</Tag>
        <Tag box={PRICE} y={589} className="left-px h-[11px] bg-[#90ee90] px-px text-[10px] font-bold leading-[11px] text-black">60s</Tag>
        <Tag box={PRICE} y={756} className="left-[2px] h-[10px] bg-[#999] px-px text-[8px] leading-[10px] text-[#16f016]">12 946,7</Tag>
        <Tag box={PRICE} y={850} className="left-[2px] h-[10px] bg-[#999] px-px text-[8px] leading-[10px] text-[#f0f000]">12 934,5</Tag>
        <Tag box={PRICE} y={826} className="left-[2px] h-[10px] bg-[#999] px-px text-[8px] leading-[10px] text-[#f0f000]">12 937,1</Tag>
        <Tag box={PRICE} y={870} className="left-[2px] h-[10px] bg-[#999] px-px text-[8px] leading-[10px] text-[#f0f000]">12 934,5</Tag>
      </YAxis>
    </div>
  )
}

const rsiScale: Label[] = [100, 90, 80, 70, 60, 40, 30, 20, 10].map((v) => ({ t: String(v), x: 0, y: 66 + ((100 - v) / 10) * 48.1, bold: v === 100 }))

function RsiPlot() {
  const dark = rsiPoints(rsi21)
  const yellow = rsiPoints(rsi14)
  const area = (clamp: (y: number) => number) => points([[5, RSI_MID], [5, clamp(367)], ...dark.map(([x, y]): Pt => [x, clamp(y)]), [candleX(89), RSI_MID]])
  return (
    <div className="mt-[2px] flex min-h-0 flex-[177]">
      <Plot
        box={RSI}
        className="bg-linear-to-b from-[#a9a9a9] to-[#979797]"
        overlay={<Tab title="Relative strength index (RSI) (21) Relative strength index (RSI) (14)"><MiniWindow /></Tab>}
      >
        {rsiScale.map((l) => <path key={l.y} d={`M5 ${l.y}h1462`} stroke="#000" strokeOpacity="0.09" />)}
        {times3.map(([t, x]) => <path key={t} d={`M${x} 42v530`} stroke="#000" strokeOpacity={t.endsWith(':00') ? 0.25 : 0.1} />)}
        <polygon points={area((y) => Math.min(y, RSI_MID))} fill="#5fd05f" />
        <polygon points={area((y) => Math.max(y, RSI_MID))} fill="#cc6060" />
        <path d="M5 66H1467" stroke="#16f016" strokeWidth="2" />
        <path d="M5 210H1467" stroke="#16f016" strokeDasharray="3 2" />
        <path d="M5 307H1467" stroke="#fff" strokeDasharray="1 2" />
        <path d="M5 403H1467" stroke="#f01018" strokeDasharray="3 2" />
        <path d="M5 548H1467" stroke="#f01018" strokeWidth="2" />
        <polyline points={points(dark)} fill="none" stroke="#111" />
        {dark.map(([x, y]) => <rect key={x} x={x - 3} y={y - 4} width="6" height="7" fill="#a8a8a8" stroke="#111" strokeWidth=".7" />)}
        <polyline points={points(yellow)} fill="none" stroke="#e4e020" />
        {yellow.map(([x, y]) => <rect key={x} x={x - 3} y={y - 4} width="6" height="7" fill="none" stroke="#e4e020" strokeWidth=".8" />)}
      </Plot>
      <YAxis box={RSI} items={rsiScale} width="w-[39px]">
        <Tag box={RSI} y={279} className="left-[2px] h-[13px] bg-[#999] px-px text-[11px] leading-[13px] text-black">52,892</Tag>
        <Tag box={RSI} y={319} className="left-[2px] h-[11px] bg-[#999] px-px text-[10px] leading-[11px] text-[#ff0]">51,118</Tag>
      </YAxis>
    </div>
  )
}

function Spinner({ label }: { label: string }) {
  return (
    <span className="flex h-[13px] w-[30px] items-center bg-white">
      <input aria-label={label} defaultValue="1" className="mr-[2px] w-[21px] text-right text-[9px] outline-none" />
      <SpinArrows />
    </span>
  )
}

function BigPrice({ label, value, color }: { label: string; value: string; color: string }) {
  return (
    <button type="button" className={`flex flex-col items-center whitespace-nowrap text-black ${color}`}>
      <span className="mt-1 text-[16px] leading-[20px] text-white/65">{label}</span>
      <span className="mt-[9px] text-[30px] leading-[36px]">{value}</span>
      <span className="mt-[9px] text-[8px] leading-[10px]">+ Stop (G) 50</span>
    </button>
  )
}

function OrderWindow() {
  return (
    <section className="flex min-w-0 flex-col border-x-2 border-[#5a90e8] bg-[#cfdce4] text-[8px]">
      <div className="flex h-4 shrink-0 items-center bg-linear-to-b from-[#6ea4f4] to-[#5b90e6] font-bold text-white">
        <Candles white /><Caret className="ml-px text-white" />
        <span className="ml-[3px]">DAX</span>
        <span className="ml-[6px]"><Info /></span>
        <span className="ml-[5px] bg-[#10a81c] px-[2px] leading-[12px]">12 964,9 (+0,39%)</span>
        <span className="ml-[3px]">09:50:01 Allemagne 30 Cash (1€)</span>
        <span className="ml-auto flex items-center gap-1 pr-[3px]"><WindowKeys pin /></span>
      </div>
      <div className="grid h-[102px] shrink-0 grid-cols-[127fr_164fr_127fr]">
        <div className="grid grid-cols-[48px_auto] content-start items-center gap-y-[3px] border-r border-[#a3b4be] pl-1 pt-[13px] leading-[10px]">
          <span>Gain latent :</span><b>0,00 pts</b>
          <span>Gain Jour :</span><b className="text-[#0a9a14]">40,47 pts</b>
          <span>Trades jour :</span><b><span className="text-[#0a9a14]">25</span> / 0 / <span className="text-[#e0121c]">2</span></b>
          <span>Ordres :</span><b className="flex items-center gap-[2px]">0<CrossBox /><span className="ml-1">/ 0</span><Gears /></b>
          <span>Position :</span><b className="flex h-3 items-center gap-[2px]">0<CrossBox pink /><span className="ml-1">/ 0</span><Gears /></b>
          <span>Durée pos. :</span><b>-</b>
        </div>
        <div className="flex flex-col items-center px-[6px] pt-[10px]">
          <label className="flex flex-col items-center">
            <span className="leading-[10px]">Qté</span>
            <input defaultValue="0.5" className="h-[23px] w-[56px] border border-[#a9bac4] bg-white pr-px text-right text-[16px] text-black outline-none" />
          </label>
          <div className="mt-[6px] flex w-full items-center pl-[7px] font-normal">
            <label className="flex items-center gap-[2px] text-gray-400"><input type="checkbox" defaultChecked disabled className="m-0 h-[9px] w-[9px]" />Stop (G)</label>
            <input aria-label="Stop pts" defaultValue="50" className="ml-1 h-[14px] w-3 rounded-sm border border-gray-300 bg-white text-center text-[8px] outline-none" /><span className="ml-px">pts</span>
            <label className="ml-[13px] flex items-center gap-[2px]"><input type="checkbox" className="m-0 h-[9px] w-[9px] appearance-none border border-gray-400 bg-white" />Limite</label>
            <input aria-label="Limite pts" defaultValue="5" className="ml-1 h-[14px] w-2 rounded-sm border border-gray-400 text-center text-[8px] text-gray-400 outline-none" /><span className="ml-px">pts</span>
          </div>
          <div className="mt-[13px] h-px w-full bg-[#9fb0ba]" />
          <div className="mt-[6px] flex w-full justify-between pl-[18px] pr-[22px]"><Spinner label="Ticks stop" /><Spinner label="Ticks limite" /></div>
        </div>
        <div className="border-l border-[#a3b4be]" />
      </div>
      <div className="grid h-[91px] shrink-0 grid-cols-[127fr_164fr_127fr] border-y border-[#9fb0ba]">
        <BigPrice label="Vendre 0,5" value="12 964,3" color="bg-[#e9babb]" />
        <div className="flex flex-col border-x border-[#a3b4be] text-[#98a6ae]">
          <div className="grid h-[18px] grid-cols-2 border-b border-[#a3b4be]">
            <button type="button" className="border-r border-[#a3b4be]">Stop à 1 ticks</button>
            <button type="button">Limite à 1 ticks</button>
          </div>
          <button type="button" className="flex-1">Pas de position</button>
        </div>
        <BigPrice label="Acheter 0,5" value="12 965,5" color="bg-[#aacfa8]" />
      </div>
      <div className="flex h-[21px] shrink-0 items-center text-[#98a6ae]">
        <button type="button" aria-label="Disposition" className="flex h-full w-[18px] items-center justify-center border-r border-[#a3b4be]">
          <svg width="15" height="13" viewBox="0 0 15 13">
            <rect x=".5" y=".5" width="14" height="11" fill="#fff" stroke="#444" /><path d="M1 2h4v5H1z" fill="#e04850" /><path d="M10 2h4v5h-4z" fill="#2fae3c" /><path d="M5 1v10M10 1v10M1 7.500h13" stroke="#888" /><path d="M10 10h5l-2.500 3z" fill="#000" />
          </svg>
        </button>
        <button type="button" className="h-full flex-1 border-r border-[#a3b4be]">Inverser position</button>
        <button type="button" className="h-full flex-[1.15]">Pas d'ordres en attente</button>
        <div className="flex items-center gap-[6px] px-1">
          <svg width="14" height="13" viewBox="0 0 14 13"><rect width="14" height="13" fill="#fff" /><path d="M0 1h14" stroke="#2a2" /><path d="M0 12h14" stroke="#d22" /><path d="M2 6l4 4 7-7" stroke="#2bb04a" strokeWidth="2.2" fill="none" /></svg>
          <LinkIcon />
          <span className="relative"><BookIcon /><Wrench size={10} color="#111" className="absolute left-px top-px" /></span>
        </div>
      </div>
      <div className="flex h-[10px] shrink-0 items-center bg-[#44698f] text-white">
        <span className="ml-px flex h-[9px] w-[10px] items-center justify-center border border-white text-[6px] leading-none">N</span>
        <Wrench size={9} className="ml-1" fill="#fff" />
        <span className="flex-[120] text-center">Qté</span><span>|</span>
        <span className="flex-[146] text-center">Prix de revient unitaire</span><span>|</span>
        <span className="flex flex-[127] justify-center"><svg width="6" height="8" viewBox="0 0 6 8"><path d="M3 0l3 4H4v4H2V4H0z" fill="#fff" /></svg></span>
      </div>
      <div className="min-h-0 flex-1 bg-[#9bb8c6]" />
      <div className="flex h-[13px] shrink-0 items-center justify-between bg-[#a6c3d0]">
        <span>Offre <span className="text-[#3a8ad8]">➜</span><b>0</b></span>
        <span>Spread: 1,2</span>
        <span><b>0</b><span className="text-[#3a8ad8]">⬅</span> Demande</span>
      </div>
    </section>
  )
}

const perfScale: Label[] = [35, 30, 25, 20, 15, 5, 0].map((v) => ({ t: String(v), x: 0, y: 792 - v * 16.15, bold: v === 0 }))

function PerformanceWindow() {
  return (
    <section className="flex min-w-0 flex-col bg-[#b4ced9] pl-px text-[8px]">
      <div className="flex h-4 shrink-0 items-center overflow-hidden whitespace-nowrap">
        <Candles /><span>Performance</span>
        <Caret className="ml-[6px] text-black" /><b className="ml-[3px]">Tous les instruments</b>
        <span className="ml-auto bg-white px-px leading-[14px]">Aujo</span>
        <span className="ml-[2px] flex gap-[3px] pr-px"><WindowKeys muted keyboard={false} /></span>
      </div>
      <div className="flex min-h-0 flex-1">
        <Plot
          box={PERF}
          className=""
          overlay={<>
            <span className="absolute left-px top-px whitespace-nowrap leading-[10px]">Horizontal: <b>Transactions</b>, Vertical: <b>Devise (€)</b>,</span>
            <span className="absolute bottom-px left-px text-[8px] leading-none text-[#e0121c]">© IT-Finance.com</span>
          </>}
        >
          <defs>
            <linearGradient id="gain" x1="0" y1="0" x2="0" y2="1"><stop stopColor="#abe8ca" /><stop offset="1" stopColor="#92cdb4" /></linearGradient>
            <linearGradient id="base" x1="0" y1="0" x2="0" y2="1"><stop stopColor="#a3bfd2" /><stop offset="1" stopColor="#98b4c2" /></linearGradient>
          </defs>
          <rect x="1040" y="72" width="432" height="560" fill="url(#gain)" />
          <rect x="1040" y="632" width="432" height="223" fill="url(#base)" />
          {perfScale.map((l) => <path key={l.y} d={`M1040 ${l.y}h432`} stroke="#000" strokeOpacity=".1" />)}
          <path d="M1181 72v783M1323 72v783M1464 72v783" stroke="#000" strokeOpacity=".1" />
          <path d="M1040 793H1472" stroke="#4a5ae8" />
          {perf.slice(1).map((p, i) => (
            <polyline key={i} points={points([perf[i], p])} fill="none" stroke={i === 15 || i === 22 ? '#d04848' : '#2fa040'} />
          ))}
          {perf.map(([x, y], i) => !perfHidden.includes(i) && <rect key={x} x={x - 3} y={y - 4} width="7" height="8" rx="3" fill="#a4e0c2" stroke="#2fa040" strokeWidth=".8" />)}
        </Plot>
        <YAxis box={PERF} items={perfScale} width="w-[37px]">
          <Tag box={PERF} y={136} className="left-[2px] h-3 bg-[#f5cc14] px-px text-[8px] leading-[12px]">40,47</Tag>
          <Tag box={PERF} y={629} className="left-[2px] h-[11px] border border-[#5ecb5e] bg-white px-px text-[8px] leading-[9px] text-[#5ecb5e]">10</Tag>
        </YAxis>
      </div>
      <div className="flex h-[14px] shrink-0 bg-white">
        <div className="relative flex-1">
          <Labels box={{ ...PERF, y: 0, h: 14 }} items={[['10', 1181], ['20', 1323], ['30', 1464]].map(([t, x]) => ({ t: String(t), x: Number(x), y: 7, anchor: 'middle' as const }))} />
        </div>
        <div className="w-[37px]" />
      </div>
    </section>
  )
}

export default function App() {
  return (
    <main className="flex h-screen flex-col overflow-hidden border-b border-[#2c3a42] bg-[#8fadbb] font-['Liberation_Sans',Arial,sans-serif] text-[8px] leading-none text-[#111]">
      <TopBar />
      <div className="grid min-h-0 flex-1 grid-cols-[minmax(0,641fr)_minmax(0,638fr)_minmax(0,641fr)] grid-rows-[minmax(0,1fr)]">
        <RenkoPanel title="Renko (1.5)" box={RENKO1} labels={scale1} times={times1} pts={zig1} tagY={[406, 432]} thumb="w-[86px]">
          <polygon points={points([...upper, ...[...lower].reverse()])} fill="#9c98be" fillOpacity=".68" />
          <Band pts={upper} />
          <Band pts={lower} />
          {middle.map((m, i) => <polyline key={i} points={points(m.pts)} fill="none" stroke={m.color} strokeWidth="2" strokeDasharray="3 3" />)}
        </RenkoPanel>
        <RenkoPanel title="Renko (1)" box={RENKO2} labels={scale2} times={times2} pts={zig2} tagY={[625, 657]} ticks thumb="w-[78px]" />
        <div className="relative flex min-h-0 min-w-0 flex-col">
          <section className="flex min-h-0 flex-1 flex-col bg-[#9fc0ce] pl-[3px] pr-[2px]">
            <TitleBar />
            <StatsRow />
            <ChartToolbar />
            <PricePlot />
            <RsiPlot />
            <XAxis box={PRICE} times={times3} width="w-[39px]" />
            <BottomBar thumb="w-[67px]" />
          </section>
          <div className="grid h-[292px] shrink-0 grid-cols-[minmax(0,422fr)_minmax(0,216fr)] bg-[#8fadbb] pl-px pr-[2px]">
            <OrderWindow />
            <PerformanceWindow />
          </div>
          <span className="absolute bottom-1 right-0 h-[54px] w-[3px] bg-[#15191c]" />
        </div>
      </div>
    </main>
  )
}
